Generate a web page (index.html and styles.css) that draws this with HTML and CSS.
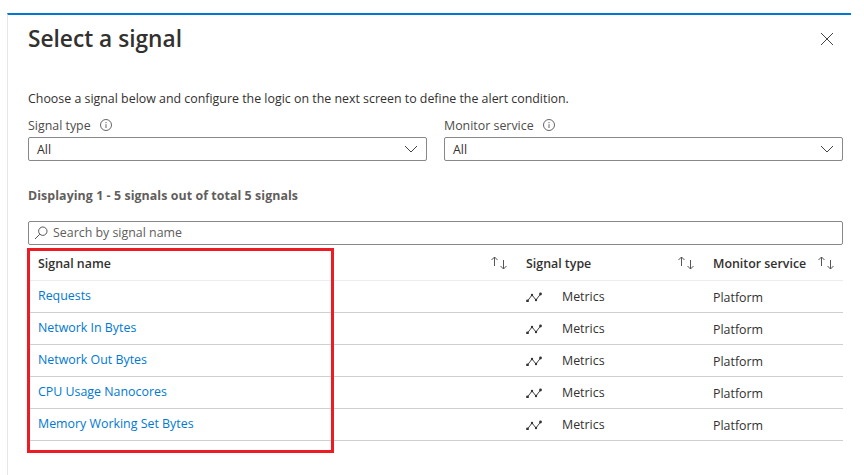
FILE: index.html
```html
<!DOCTYPE html>
<html lang="en">
<head>
<meta charset="UTF-8">
<meta name="viewport" content="width=device-width, initial-scale=1.0">
<title>Select a signal</title>
<link rel="stylesheet" href="styles.css">
</head>
<body>
<div class="panel">
    <div class="panel-head">
        <h1>Select a signal</h1>
        <svg class="close" width="14" height="14" viewBox="0 0 14 14"><path d="M1 1l12 12M13 1L1 13" stroke="#444" fill="none"/></svg>
    </div>
    <p class="intro">Choose a signal below and configure the logic on the next screen to define the alert condition.</p>
    <div class="filters">
        <div class="filter">
            <label>Signal type <svg class="info" width="12" height="12" viewBox="0 0 12 12"><circle cx="6" cy="6" r="5.5" stroke="#666" fill="none"/><path d="M6 5.2V9M6 3v1.2" stroke="#666" fill="none"/></svg></label>
            <div class="dropdown"><span>All</span><svg width="14" height="8" viewBox="0 0 14 8"><path d="M1 1l6 6 6-6" stroke="#444" fill="none"/></svg></div>
        </div>
        <div class="filter">
            <label>Monitor service <svg class="info" width="12" height="12" viewBox="0 0 12 12"><circle cx="6" cy="6" r="5.5" stroke="#666" fill="none"/><path d="M6 5.2V9M6 3v1.2" stroke="#666" fill="none"/></svg></label>
            <div class="dropdown"><span>All</span><svg width="14" height="8" viewBox="0 0 14 8"><path d="M1 1l6 6 6-6" stroke="#444" fill="none"/></svg></div>
        </div>
    </div>
    <p class="count">Displaying 1 - 5 signals out of total 5 signals</p>
    <div class="search">
        <svg width="14" height="14" viewBox="0 0 14 14"><circle cx="8.8" cy="5.2" r="4.2" stroke="#555" fill="none"/><path d="M5.8 8.2L1 13" stroke="#555" fill="none"/></svg>
        <span>Search by signal name</span>
    </div>
    <div class="table">
        <div class="row head">
            <div class="cell name">Signal name <svg class="sort" width="18" height="14" viewBox="0 0 18 14"><path d="M4.5 10V1M1.5 4l3-3 3 3M13.5 4v9M10.5 10l3 3 3-3" stroke="#555" fill="none"/></svg></div>
            <div class="cell type">Signal type <svg class="sort" width="18" height="14" viewBox="0 0 18 14"><path d="M4.5 10V1M1.5 4l3-3 3 3M13.5 4v9M10.5 10l3 3 3-3" stroke="#555" fill="none"/></svg></div>
            <div class="cell service">Monitor service <svg class="sort" width="18" height="14" viewBox="0 0 18 14"><path d="M4.5 10V1M1.5 4l3-3 3 3M13.5 4v9M10.5 10l3 3 3-3" stroke="#555" fill="none"/></svg></div>
        </div>
        <div class="row">
            <div class="cell name"><a href="#">Requests</a></div>
            <div class="cell type"><svg class="metric" width="16" height="10" viewBox="0 0 16 10"><path d="M1.5 9L6 3l4 5 4.5-6" stroke="#444" fill="none"/><circle cx="1.5" cy="9" r="1.4" fill="#333"/><circle cx="6" cy="3" r="1.2" fill="#333"/><circle cx="10" cy="8" r="1.2" fill="#333"/><circle cx="14.5" cy="2" r="1.4" fill="#333"/></svg><span>Metrics</span></div>
            <div class="cell service">Platform</div>
        </div>
        <div class="row">
            <div class="cell name"><a href="#">Network In Bytes</a></div>
            <div class="cell type"><svg class="metric" width="16" height="10" viewBox="0 0 16 10"><path d="M1.5 9L6 3l4 5 4.5-6" stroke="#444" fill="none"/><circle cx="1.5" cy="9" r="1.4" fill="#333"/><circle cx="6" cy="3" r="1.2" fill="#333"/><circle cx="10" cy="8" r="1.2" fill="#333"/><circle cx="14.5" cy="2" r="1.4" fill="#333"/></svg><span>Metrics</span></div>
            <div class="cell service">Platform</div>
        </div>
        <div class="row">
            <div class="cell name"><a href="#">Network Out Bytes</a></div>
            <div class="cell type"><svg class="metric" width="16" height="10" viewBox="0 0 16 10"><path d="M1.5 9L6 3l4 5 4.5-6" stroke="#444" fill="none"/><circle cx="1.5" cy="9" r="1.4" fill="#333"/><circle cx="6" cy="3" r="1.2" fill="#333"/><circle cx="10" cy="8" r="1.2" fill="#333"/><circle cx="14.5" cy="2" r="1.4" fill="#333"/></svg><span>Metrics</span></div>
            <div class="cell service">Platform</div>
        </div>
        <div class="row">
            <div class="cell name"><a href="#">CPU Usage Nanocores</a></div>
            <div class="cell type"><svg class="metric" width="16" height="10" viewBox="0 0 16 10"><path d="M1.5 9L6 3l4 5 4.5-6" stroke="#444" fill="none"/><circle cx="1.5" cy="9" r="1.4" fill="#333"/><circle cx="6" cy="3" r="1.2" fill="#333"/><circle cx="10" cy="8" r="1.2" fill="#333"/><circle cx="14.5" cy="2" r="1.4" fill="#333"/></svg><span>Metrics</span></div>
            <div class="cell service">Platform</div>
        </div>
        <div class="row">
            <div class="cell name"><a href="#">Memory Working Set Bytes</a></div>
            <div class="cell type"><svg class="metric" width="16" height="10" viewBox="0 0 16 10"><path d="M1.5 9L6 3l4 5 4.5-6" stroke="#444" fill="none"/><circle cx="1.5" cy="9" r="1.4" fill="#333"/><circle cx="6" cy="3" r="1.2" fill="#333"/><circle cx="10" cy="8" r="1.2" fill="#333"/><circle cx="14.5" cy="2" r="1.4" fill="#333"/></svg><span>Metrics</span></div>
            <div class="cell service">Platform</div>
        </div>
        <div class="highlight"></div>
    </div>
</div>
</body>
</html>
```
FILE: styles.css
```css
html, body {
    height: 100%;
}

body {
    margin: 0;
    padding: 13px 13px 0 7px;
    box-sizing: border-box;
    overflow: hidden;
    background: #fff;
    color: #323130;
    font-family: "Open Sans", "Noto Sans", sans-serif;
    font-size: 12.4px;
}

.panel {
    height: 100%;
    box-sizing: border-box;
    border-top: 2px solid #0078d4;
    border-left: 1px solid #e6e6e6;
    padding: 0 0 0 20px;
}

.panel-head {
    display: flex;
    justify-content: space-between;
    align-items: center;
    height: 48px;
    padding-right: 17px;
}

h1 {
    margin: 0;
    font-size: 22.7px;
    font-weight: 600;
    line-height: 48px;
}

.intro {
    margin: 28px 0 0;
    line-height: 16px;
}

.filters {
    display: flex;
    gap: 17px;
    margin-top: 10px;
    padding-right: 8px;
}

.filter {
    flex: 1;
}

.filter label {
    display: flex;
    align-items: center;
    gap: 9px;
    height: 16px;
    color: #4d4c4b;
}

.dropdown {
    display: flex;
    justify-content: space-between;
    align-items: center;
    height: 24px;
    box-sizing: border-box;
    margin-top: 4px;
    padding: 0 8px;
    border: 1px solid #8a8886;
    border-radius: 2px;
}

.count {
    margin: 27px 0 0;
    font-weight: 700;
    letter-spacing: 0.07px;
    line-height: 16px;
    color: #605e5c;
}

.search {
    display: flex;
    align-items: center;
    gap: 5px;
    height: 24px;
    box-sizing: border-box;
    margin: 17px 8px 0 0;
    padding: 0 5px;
    border: 1px solid #8a8886;
    border-radius: 2px;
    color: #605e5c;
}

.search span {
    padding-bottom: 2px;
}

.table {
    position: relative;
    margin-right: 8px;
}

.row {
    display: grid;
    grid-template-columns: 488px 187px 140px;
    height: 32px;
    box-sizing: border-box;
    border-bottom: 1px solid #cfcfcf;
}

.row.head {
    height: 36px;
    border-bottom-color: #ececec;
    font-weight: 600;
}

.cell {
    display: flex;
    align-items: center;
}

.cell.name {
    padding-left: 10px;
    padding-bottom: 2px;
}

.cell a {
    color: #0078d4;
    text-decoration: none;
}

.cell.type {
    padding-left: 10px;
}

.cell.service {
    padding-left: 10px;
    padding-right: 8px;
    padding-top: 2px;
}

.head .cell {
    justify-content: space-between;
    padding-right: 8px;
    padding-bottom: 0;
    padding-top: 1px;
}

.metric {
    margin-right: 20px;
}

.sort {
    flex: none;
}

.highlight {
    position: absolute;
    left: -1px;
    top: 3px;
    width: 301px;
    height: 199px;
    border: 3px solid #ed1c24;
}
```
